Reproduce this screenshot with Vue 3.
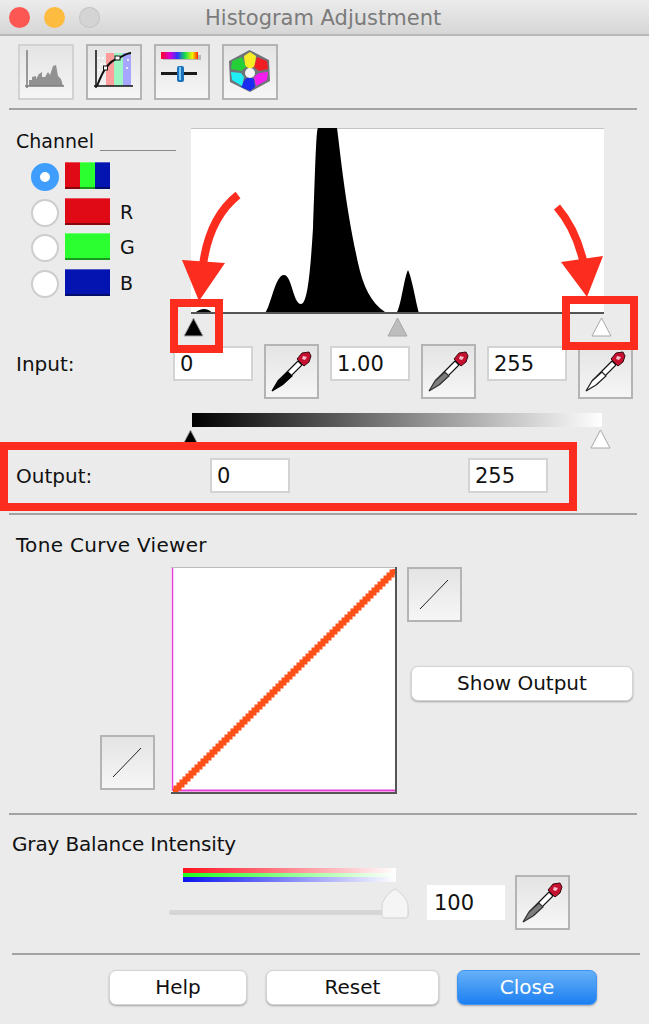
<template>
  <div class="window">
    <header class="titlebar">
      <div class="lights">
        <span class="light red"></span>
        <span class="light amber"></span>
        <span class="light off"></span>
      </div>
      <div class="title">Histogram Adjustment</div>
    </header>

    <svg width="0" height="0" class="defs">
      <symbol id="dropper" viewBox="2 2 51 51">
        <path d="M34 17 L15 36 L19 40 L38 21 Z" fill="#fff" stroke="#111" stroke-width="1.2" />
        <path d="M24 28 L14 37 L8 47 L18 41 L28 32 Z" fill="var(--liquid)" stroke="var(--liquid-line)" stroke-width="1.2" />
        <path d="M33 15 L38 9 L45 8 L47 12 L45 18 L40 22 Z" fill="#c5112f" stroke="#3a0a12" stroke-width="1" />
        <path d="M39 12 L43 13 L41 16 L38 15 Z" fill="#f6c0cc" />
      </symbol>
      <symbol id="diagonal" viewBox="2 2 51 51">
        <line x1="13" y1="42" x2="41" y2="13" stroke="#222" stroke-width="1" />
      </symbol>
    </svg>

    <div class="toolbar">
      <button class="tool-btn faded">
        <svg width="52" height="52" viewBox="0 0 52 52">
          <path d="M9 40 V34 L12 34 V31 L16 30 V33 L19 28 L22 26 V31 L25 31 L28 26 L30 29 L33 20 L36 19 L38 30 L41 33 L43 40 Z" fill="#929292" />
          <path d="M7 4 V42 M5 40 H44" stroke="#7d7d7d" stroke-width="1.5" fill="none" />
        </svg>
      </button>
      <button class="tool-btn">
        <svg width="52" height="52" viewBox="0 0 52 52">
          <rect x="18" y="7" width="8" height="33" fill="#ff9d9d" />
          <rect x="26" y="7" width="9" height="33" fill="#9df5c3" />
          <rect x="35" y="7" width="8" height="33" fill="#a6a6ff" />
          <path d="M10 12 h6 M12 18 h6 M10 24 h5 M30 10 h3 M39 14 h3 M38 22 h3" stroke="#fff" stroke-width="1.5" stroke-dasharray="2 2" />
          <path d="M8 4 V42 M6 40 H45" stroke="#111" stroke-width="1.5" fill="none" />
          <path d="M9 40 C13 30 16 24 18 22 C22 16 27 13 31 12 C35 10 39 7 43 7" stroke="#111" stroke-width="2" fill="none" />
          <rect x="15.500" y="20" width="4" height="4" fill="#fff" stroke="#111" />
          <rect x="27" y="10" width="5" height="4" fill="#fff" stroke="#111" />
        </svg>
      </button>
      <button class="tool-btn">
        <svg width="52" height="52" viewBox="0 0 52 52">
          <defs>
            <linearGradient id="rainbow">
              <stop offset="0" stop-color="#ff0022" />
              <stop offset="0.25" stop-color="#d400d8" />
              <stop offset="0.45" stop-color="#2a38ff" />
              <stop offset="0.65" stop-color="#13e04b" />
              <stop offset="0.85" stop-color="#f6f000" />
              <stop offset="1" stop-color="#ff2600" />
            </linearGradient>
          </defs>
          <rect x="7" y="9" width="38" height="5" fill="#b8b8b8" />
          <rect x="5" y="6" width="37" height="7" fill="url(#rainbow)" />
          <rect x="5" y="26" width="36" height="3" fill="#1b1b1b" />
          <rect x="21" y="20" width="7" height="16" rx="2" fill="#1d73bb" />
          <rect x="23" y="21" width="2" height="13" fill="#7cc8f6" />
        </svg>
      </button>
      <button class="tool-btn">
        <svg width="52" height="52" viewBox="0 0 52 52">
          <path d="M25.500 4 L45 14 L46 35 L26 46 L6 36 L5 15 Z" fill="#6d7378" />
          <path d="M26 6 L32 10 L31 20 L26 23 L21 20 L20 10 Z" fill="#f8ec27" />
          <path d="M33 11 L43 15 L44 23 L35 25 L30 21 Z" fill="#ef1d24" />
          <path d="M35 27 L44 26 L43 34 L32 40 L30 31 Z" fill="#f31df0" />
          <path d="M26 31 L30 33 L31 41 L26 45 L17 41 L21 33 Z" fill="#1a2cf0" />
          <path d="M17 27 L20 31 L18 40 L8 34 L7 26 Z" fill="#20eef5" />
          <path d="M18 11 L22 21 L17 25 L7 23 L8 15 Z" fill="#25cf38" />
          <circle cx="26" cy="27" r="5" fill="#f4f4f4" />
        </svg>
      </button>
    </div>
    <hr class="rule toolbar-rule" />

    <section class="channel">
      <div class="channel-side">
        <div class="channel-head"><span>Channel</span><i class="head-line"></i></div>
        <div class="channel-list">
          <div v-for="c in channels" :key="c.name" class="channel-row">
            <span class="radio" :class="{ checked: c.checked }"></span>
            <span class="swatch" :class="c.swatch"><i v-if="c.checked"></i><i v-if="c.checked"></i><i v-if="c.checked"></i></span>
            <span class="channel-name">{{ c.label }}</span>
          </div>
        </div>
      </div>
      <svg class="histogram" width="413" height="186" viewBox="0 0 413 186">
        <rect width="413" height="186" fill="#fff" />
        <path d="M0 0.500 H413" stroke="#c4c4c4" />
        <path d="M4 185 C7 182 10 181 13 181 C16 181 19 182 21 185 Z" fill="#000" />
        <path d="M74 185 C80 178 84 147 93 147 C101 147 102 176 110 176 C116 176 119 150 122 100 C124 50 125 0 127 0 L146 0 C150 30 154 75 167 135 C172 158 180 175 194 184 L206 184 C210 178 213 150 217 142 C221 150 225 175 228 185 Z" fill="#000" />
        <path d="M0 185 H413" stroke="#555" stroke-width="2" />
      </svg>
    </section>

    <div class="marks input-marks">
      <svg v-for="m in inputMarks" :key="m" width="21" height="20" viewBox="0 0 21 20">
        <path d="M10.500 1 L20 19 H1 Z" :fill="m" stroke="#a8a8a8" />
      </svg>
    </div>

    <div class="input-row">
      <label class="row-label">Input:</label>
      <div class="field">0</div>
      <button class="tool-btn drop black"><svg width="51" height="51"><use href="#dropper" /></svg></button>
      <div class="field">1.00</div>
      <button class="tool-btn drop gray"><svg width="51" height="51"><use href="#dropper" /></svg></button>
      <div class="field">255</div>
      <button class="tool-btn drop white"><svg width="51" height="51"><use href="#dropper" /></svg></button>
    </div>

    <div class="gray-bar"></div>
    <div class="marks output-marks">
      <svg v-for="m in outputMarks" :key="m" width="21" height="20" viewBox="0 0 21 20">
        <path d="M10.500 1 L20 19 H1 Z" :fill="m" stroke="#a8a8a8" />
      </svg>
    </div>

    <div class="output-row">
      <label class="row-label output-label">Output:</label>
      <div class="field">0</div>
      <div class="field output-high">255</div>
    </div>
    <hr class="rule output-rule" />

    <h2 class="section-title tone-title">Tone Curve Viewer</h2>
    <div class="curve-row">
      <button class="tool-btn line-btn lower"><svg width="51" height="51"><use href="#diagonal" /></svg></button>
      <svg class="curve" width="226" height="227" viewBox="0 0 226 227">
        <rect width="226" height="227" fill="#fff" />
        <path d="M0 0.500 H226" stroke="#bdbdbd" />
        <path d="M1.500 1 V224" stroke="#e83fd8" stroke-width="1.500" />
        <path d="M2 223.500 H224" stroke="#e83fd8" stroke-width="2" />
        <path :d="curvePath" stroke="#ff5018" stroke-width="5" fill="none" />
        <path d="M225 0 V226 H0" stroke="#555" stroke-width="2" fill="none" />
      </svg>
      <div class="curve-side">
        <button class="tool-btn line-btn"><svg width="51" height="51"><use href="#diagonal" /></svg></button>
        <button class="push show-output">Show Output</button>
      </div>
    </div>
    <hr class="rule curve-rule" />

    <h2 class="section-title gray-title">Gray Balance Intensity</h2>
    <div class="balance-row">
      <div class="balance-slider">
        <div class="rgb-bar"><i class="r"></i><i class="g"></i><i class="b"></i></div>
        <div class="track">
          <svg class="thumb" width="30" height="31" viewBox="0 0 30 31">
            <path d="M15 1 C19 3 28 11 28 18 V27 C28 29 27 30 25 30 H5 C3 30 2 29 2 27 V18 C2 11 11 3 15 1 Z" fill="#f5f5f5" stroke="#d2d2d2" />
          </svg>
        </div>
      </div>
      <div class="field balance-field">100</div>
      <button class="tool-btn drop gray balance-drop"><svg width="51" height="51"><use href="#dropper" /></svg></button>
    </div>
    <hr class="rule balance-rule" />

    <div class="actions">
      <button class="push help">Help</button>
      <button class="push reset">Reset</button>
      <button class="push close">Close</button>
    </div>

    <!-- red callouts drawn on top of the dialog -->
    <svg class="annotations" width="649" height="1024" viewBox="0 0 649 1024">
      <g fill="none" stroke="#fc2d1f" stroke-width="8">
        <rect x="174" y="303" width="45" height="46" />
        <rect x="566" y="300" width="68" height="46" />
        <rect x="4" y="446" width="569" height="61" />
        <path d="M238 195 C219 210 207 235 203 265" />
        <path d="M557 207 C570 222 578 240 583 260" />
      </g>
      <path d="M182 260 L225 263 L199 301 Z M561 262 L603 256 L587 297 Z" fill="#fc2d1f" />
    </svg>
  </div>
</template>

<script setup>
import { computed } from 'vue';

const channels = [
  { name: 'rgb', label: '', swatch: 'rgb', checked: true },
  { name: 'r', label: 'R', swatch: 'red' },
  { name: 'g', label: 'G', swatch: 'green' },
  { name: 'b', label: 'B', swatch: 'blue' },
];

const inputMarks = ['#000', '#bdbdbd', '#fff'];
const outputMarks = ['#000', '#fff'];

// stair-stepped identity curve, the viewer plots it in coarse pixels
const curvePath = computed(() => {
  let d = 'M2 224';
  for (let i = 1; i <= 74; i++) {
    d += ` H${2 + i * 3} V${224 - i * 3}`;
  }
  return d;
});
</script>

<style>
html,
body {
  margin: 0;
  background: #ebebeb;
}
</style>

<style scoped>
.window {
  position: relative;
  width: 649px;
  height: 1024px;
  overflow: hidden;
  background: #ebebeb;
  color: #111;
  font-family: "DejaVu Sans", sans-serif;
  font-size: 20px;
}
.defs {
  position: absolute;
}
.titlebar {
  display: flex;
  align-items: center;
  box-sizing: border-box;
  height: 36px;
  padding-left: 9px;
  background: linear-gradient(#ececec, #d6d6d6);
  border-bottom: 2px solid #b9b9b9;
}
.lights {
  display: flex;
  gap: 14px;
}
.light {
  width: 21px;
  height: 21px;
  border-radius: 50%;
}
.light.red {
  background: #fc5753;
}
.light.amber {
  background: #fdbc40;
}
.light.off {
  background: #d4d4d4;
  box-shadow: inset 0 0 0 1px #c6c6c6;
}
.title {
  margin: 2px 0 0 105px;
  color: #7b7b7b;
  font-size: 21px;
  white-space: nowrap;
}
.toolbar {
  display: flex;
  gap: 12px;
  margin: 8px 0 0 18px;
}
.tool-btn {
  display: flex;
  align-items: center;
  justify-content: center;
  box-sizing: border-box;
  flex: none;
  width: 55px;
  height: 55px;
  margin: 0;
  padding: 0;
  border: 2px solid #b4b4b4;
  background: linear-gradient(#e4e4e4, #f6f6f6);
}
.toolbar .tool-btn {
  width: 56px;
  height: 56px;
}
.tool-btn.faded {
  border-color: #d2d2d2;
}
.drop.black {
  --liquid: #050505;
  --liquid-line: #000;
}
.drop.gray {
  --liquid: #7d7d7d;
  --liquid-line: #333;
}
.drop.white {
  --liquid: #fff;
  --liquid-line: #222;
}
.rule {
  height: 2px;
  margin: 0 12px 0 9px;
  border: 0;
  background: #a2a2a2;
}
.toolbar-rule {
  margin-top: 8px;
}
.channel {
  display: flex;
  margin-top: 18px;
}
.channel-side {
  box-sizing: border-box;
  width: 191px;
  padding: 1px 0 0 16px;
  font-size: 19px;
}
.channel-head {
  display: flex;
  height: 24px;
  line-height: 24px;
}
.head-line {
  width: 76px;
  height: 21px;
  margin-left: 6px;
  border-bottom: 1px solid #8a8a8a;
}
.channel-list {
  display: flex;
  flex-direction: column;
  gap: 8.500px;
  margin: 9px 0 0 15px;
}
.channel-row {
  display: flex;
  align-items: center;
  height: 27px;
}
.radio {
  box-sizing: border-box;
  flex: none;
  width: 28px;
  height: 28px;
  margin-top: 3px;
  border: 2px solid #cdcdcd;
  border-radius: 50%;
  background: #fff;
}
.radio.checked {
  border: 9px solid #3f9dfd;
}
.swatch {
  display: flex;
  flex: none;
  width: 45px;
  height: 27px;
  margin-left: 6px;
}
.swatch i {
  flex: 1;
}
.swatch.red,
.swatch.green,
.swatch.blue,
.swatch.rgb i {
  box-shadow: inset 0 -2px 0 rgba(0, 0, 0, 0.4), inset 0 1px 0 rgba(255, 255, 255, 0.3);
}
.swatch.rgb i:nth-child(1),
.swatch.red {
  background: #e00a17;
}
.swatch.rgb i:nth-child(2),
.swatch.green {
  background: #2bff2f;
}
.swatch.rgb i:nth-child(3),
.swatch.blue {
  background: #0414b0;
}
.channel-name {
  margin-left: 10px;
  line-height: 27px;
  transform: translateY(1px);
}
.histogram {
  display: block;
  flex: none;
}
.marks {
  display: flex;
  justify-content: space-between;
  height: 20px;
}
.marks svg {
  display: block;
}
.input-marks {
  width: 429px;
  margin: 3px 0 0 183px;
}
.output-marks {
  width: 431px;
  margin: 2px 0 0 180px;
}
.input-row {
  display: flex;
  align-items: flex-start;
  gap: 11px;
  margin-top: 7px;
}
.row-label {
  flex: none;
  box-sizing: border-box;
  width: 162px;
  padding: 5px 0 0 16px;
  line-height: 30px;
}
.field {
  box-sizing: border-box;
  flex: none;
  width: 80px;
  height: 35px;
  margin-top: 2px;
  padding-left: 5px;
  border: 2px solid #d3d3d3;
  background: #fff;
  font-size: 21px;
  line-height: 33px;
}
.gray-bar {
  width: 410px;
  height: 14px;
  margin: 14px 0 0 192px;
  background: linear-gradient(90deg, #000, #fff);
}
.output-row {
  display: flex;
  height: 35px;
  margin-top: 9px;
}
.output-row .field {
  margin-top: 0;
}
.output-label {
  width: 210px;
  margin: 0;
  padding-top: 3px;
}
.output-high {
  margin-left: 178px;
}
.output-rule {
  margin-top: 20px;
}
.section-title {
  margin: 0;
  font-size: 20px;
  font-weight: 400;
  line-height: 24px;
}
.tone-title {
  margin: 18px 0 0 16px;
  letter-spacing: 0.3px;
}
.curve-row {
  display: flex;
  margin: 10px 0 0 100px;
}
.lower {
  align-self: flex-end;
  margin-bottom: 4px;
}
.curve {
  display: block;
  flex: none;
  margin: 0 10px 0 16px;
}
.curve-side {
  display: flex;
  flex-direction: column;
  align-items: flex-start;
  gap: 44px;
}
.push {
  box-sizing: border-box;
  height: 35px;
  margin: 0;
  padding: 0 0 2px;
  border: 1px solid #d4d4d4;
  border-radius: 7px;
  background: #fff;
  box-shadow: 0 1px 2px rgba(0, 0, 0, 0.3);
  color: #111;
  font-family: inherit;
  font-size: 20px;
}
.show-output {
  width: 222px;
  margin-left: 4px;
}
.curve-rule {
  margin-top: 19px;
}
.gray-title {
  margin: 17px 0 0 12px;
  letter-spacing: -0.15px;
}
.balance-row {
  display: flex;
  align-items: flex-start;
  margin: 12px 0 0 169px;
}
.balance-slider {
  width: 240px;
}
.rgb-bar {
  display: flex;
  flex-direction: column;
  width: 213px;
  height: 14px;
  margin-left: 14px;
}
.rgb-bar i {
  flex: 1;
}
.rgb-bar .r {
  background: linear-gradient(90deg, #ff1020, #fff);
}
.rgb-bar .g {
  background: linear-gradient(90deg, #22ff22, #fff);
}
.rgb-bar .b {
  background: linear-gradient(90deg, #0a14f0, #fff);
}
.track {
  position: relative;
  height: 5px;
  margin-top: 28px;
  border-radius: 3px;
  background: #d6d6d6;
}
.thumb {
  position: absolute;
  top: -22px;
  right: -1px;
}
.balance-field {
  width: 78px;
  margin: 17px 0 0 18px;
  border-color: #fff;
}
.balance-drop {
  margin: 7px 0 0 10px;
}
.balance-rule {
  margin: 23px 9px 0 12px;
}
.actions {
  display: flex;
  margin: 15px 0 0 109px;
}
.help {
  width: 138px;
}
.reset {
  width: 173px;
  margin-left: 19px;
}
.close {
  width: 140px;
  margin-left: 18px;
  border-color: #3f94f3;
  background: linear-gradient(#66b1f8, #1c7ff1);
  color: #fff;
}
.annotations {
  position: absolute;
  top: 0;
  left: 0;
  pointer-events: none;
}
</style>
